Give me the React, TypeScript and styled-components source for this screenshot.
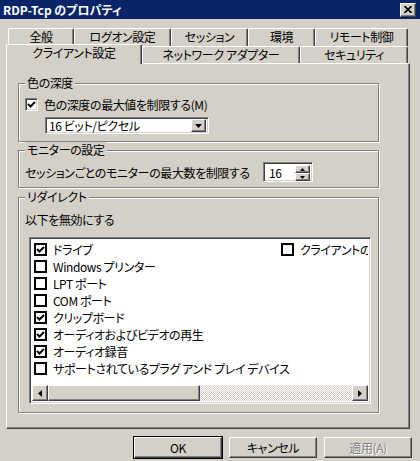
import React from 'react';
import styled, { createGlobalStyle, css } from 'styled-components';

const face = '#d4d0c8';
const shade = '#808080';
const dark = '#404040';

interface Redirect {
  label: string;
  checked: boolean;
}

const redirects: Redirect[] = [
  { label: 'ドライブ', checked: true },
  { label: 'Windows プリンター', checked: false },
  { label: 'LPT ポート', checked: false },
  { label: 'COM ポート', checked: false },
  { label: 'クリップボード', checked: true },
  { label: 'オーディオおよびビデオの再生', checked: true },
  { label: 'オーディオ録音', checked: true },
  { label: 'サポートされているプラグ アンド プレイ デバイス', checked: false },
  { label: 'クライアントの通常使うプリンター', checked: false },
];

const backTabs = [
  { label: '全般', width: 66 },
  { label: 'ログオン設定', width: 97 },
  { label: 'セッション', width: 77 },
  { label: '環境', width: 67 },
  { label: 'リモート制御', width: 93 },
];

const frontTabs = [
  { label: 'クライアント設定', width: 136, active: true },
  { label: 'ネットワーク アダプター', width: 158 },
  { label: 'セキュリティ', width: 108 },
];

const raised = css`
  border: 1px solid;
  border-color: #fff ${dark} ${dark} #fff;
  box-shadow: inset -1px -1px ${shade};
  background: ${face};
`;

const sunken = css`
  border: 1px solid;
  border-color: ${shade} #fff #fff ${shade};
  box-shadow: inset 1px 1px ${dark}, inset -1px -1px ${face};
`;

const GlobalStyle = createGlobalStyle`
  body {
    margin: 0;
    background: ${face};
  }
  * {
    box-sizing: border-box;
  }
`;

const Window = styled.div`
  width: 420px;
  height: 461px;
  overflow: hidden;
  background: ${face};
  font-family: "Noto Sans CJK JP", "Noto Sans", sans-serif;
  font-size: 12px;
  font-feature-settings: "palt";
  letter-spacing: -0.4px;
  color: #000;
  display: flex;
  flex-direction: column;
`;

const TitleBar = styled.div`
  height: 19px;
  flex: none;
  background: #0a246a;
  color: #fff;
  font-weight: bold;
  letter-spacing: 0;
  display: flex;
  align-items: center;
  justify-content: space-between;
  padding: 0 4px 0 3px;
  line-height: 19px;
`;

const CloseButton = styled.div`
  ${raised}
  width: 16px;
  height: 14px;
  display: flex;
  align-items: center;
  justify-content: center;
`;

const Content = styled.div`
  padding: 9px 10px 0 6px;
  display: flex;
  flex-direction: column;
`;

const TabRow = styled.div<{ $indent: number; $height: number }>`
  display: flex;
  align-items: flex-start;
  height: ${(p) => p.$height}px;
  padding-left: ${(p) => p.$indent}px;
`;

const Tab = styled.div<{ $width: number; $active?: boolean }>`
  position: relative;
  width: ${(p) => p.$width}px;
  height: ${(p) => (p.$active ? 20 : 18)}px;
  margin-top: ${(p) => (p.$active ? -2 : 0)}px;
  z-index: ${(p) => (p.$active ? 2 : 0)};
  background: ${face};
  border-top: 1px solid #fff;
  border-left: 1px solid #fff;
  border-right: 1px solid ${dark};
  box-shadow: inset -1px 0 ${shade};
  border-radius: 2px 2px 0 0;
  text-align: center;
  line-height: 16px;
  white-space: nowrap;
`;

const Panel = styled.div`
  position: relative;
  width: 404px;
  height: 366px;
  border: 1px solid;
  border-color: #fff ${dark} ${dark} #fff;
  box-shadow: inset -1px -1px ${shade};
  padding: 19px 0 0 11px;
  display: flex;
  flex-direction: column;
`;

const Group = styled.div<{ $height: number; $gap: number }>`
  position: relative;
  width: 361px;
  height: ${(p) => p.$height}px;
  margin-top: ${(p) => p.$gap}px;
  border: 1px solid ${shade};
  box-shadow: 1px 1px 0 #fff, inset 1px 1px 0 #fff;
  display: flex;
  flex-direction: column;
`;

const Legend = styled.span`
  position: absolute;
  top: -9px;
  left: 6px;
  padding: 0 2px;
  background: ${face};
  line-height: 16px;
`;

const CheckRow = styled.label`
  display: flex;
  align-items: center;
  gap: 6px;
  height: 17px;
  padding-left: 6px;
  margin-top: 12px;
`;

const Box = styled.span<{ $flat?: boolean }>`
  flex: none;
  width: 13px;
  height: 13px;
  background: #fff;
  display: flex;
  align-items: center;
  justify-content: center;
  ${(p) =>
    p.$flat
      ? css`
          border: 2px solid #000;
        `
      : sunken}
`;

const Combo = styled.div`
  ${sunken}
  width: 164px;
  height: 17px;
  margin: 4px 0 0 26px;
  background: #fff;
  display: flex;
  align-items: center;
  padding: 2px 2px 2px 3px;
`;

const ComboText = styled.span`
  flex: 1;
  line-height: 13px;
`;

const ArrowButton = styled.div<{ $w: number; $h: number }>`
  ${raised}
  flex: none;
  width: ${(p) => p.$w}px;
  height: ${(p) => p.$h}px;
  display: flex;
  align-items: center;
  justify-content: center;
`;

const MonitorRow = styled.div`
  display: grid;
  grid-template-columns: 238px 50px;
  align-items: center;
  padding-left: 6px;
  margin-top: 11px;
`;

const Spinner = styled.div`
  ${sunken}
  height: 20px;
  background: #fff;
  display: flex;
  align-items: stretch;
  padding: 2px;
`;

const SpinText = styled.span`
  flex: 1;
  padding-left: 3px;
  line-height: 16px;
`;

const SpinButtons = styled.div`
  display: flex;
  flex-direction: column;
  width: 15px;
`;

const Caption = styled.div`
  padding-left: 6px;
  margin-top: 14px;
  line-height: 16px;
`;

const ListBox = styled.div`
  ${sunken}
  width: 342px;
  height: 167px;
  margin: 9px 0 0 10px;
  background: #fff;
  padding: 2px;
  display: flex;
  flex-direction: column;
`;

const ListItems = styled.div`
  flex: 1;
  overflow: hidden;
  display: grid;
  grid-auto-flow: column;
  grid-template-rows: repeat(8, 17px);
  grid-auto-columns: 247px;
  padding: 1px 0 0 2px;
`;

const ListItem = styled.div`
  display: flex;
  align-items: center;
  gap: 6px;
  height: 17px;
  white-space: nowrap;
  line-height: 17px;
`;

const ScrollBar = styled.div`
  height: 16px;
  flex: none;
  display: flex;
`;

const Thumb = styled.div`
  ${raised}
  width: 152px;
`;

const Track = styled.div`
  flex: 1;
  background: repeating-conic-gradient(#fff 0 25%, ${face} 0 50%) 0 0 / 2px 2px;
`;

const ButtonRow = styled.div`
  display: flex;
  justify-content: flex-end;
  gap: 7px;
  margin: 8px -2px 0 0;
`;

const Button = styled.div<{ $default?: boolean; $disabled?: boolean }>`
  width: 88px;
  height: 21px;
  display: flex;
  align-items: center;
  justify-content: center;
  background: ${face};
  border: 1px solid;
  border-color: #fff ${dark} ${dark} #fff;
  box-shadow: inset -1px -1px ${shade};
  color: ${(p) => (p.$disabled ? shade : '#000')};
  text-shadow: ${(p) => (p.$disabled ? '1px 1px #fff' : 'none')};
  ${(p) =>
    p.$default &&
    css`
      outline: 1px solid #000;
    `}
`;

const Check: React.FC = () => (
  <svg width="9" height="9" viewBox="0 0 9 9">
    <path d="M1 4 L3.5 6.5 L8 2" stroke="#000" strokeWidth="2" fill="none" />
  </svg>
);

const Triangle: React.FC<{ dir: 'down' | 'up' | 'left' | 'right'; size?: number }> = ({ dir, size = 7 }) => {
  const h = Math.ceil(size / 2);
  const pts = {
    down: `0,0 ${size},0 ${size / 2},${h}`,
    up: `0,${h} ${size},${h} ${size / 2},0`,
    left: `${h},0 ${h},${size} 0,${size / 2}`,
    right: `0,0 0,${size} ${h},${size / 2}`,
  }[dir];
  const vertical = dir === 'down' || dir === 'up';
  return (
    <svg width={vertical ? size : h} height={vertical ? h : size}>
      <polygon points={pts} fill="#000" />
    </svg>
  );
};

const App: React.FC = () => (
  <Window>
    <GlobalStyle />
    <TitleBar>
      <span>RDP-Tcp のプロパティ</span>
      <CloseButton>
        <svg width="8" height="7" viewBox="0 0 8 7">
          <path d="M0.5 0 L7.5 7 M7.5 0 L0.5 7" stroke="#000" strokeWidth="1.7" />
        </svg>
      </CloseButton>
    </TitleBar>
    <Content>
      <TabRow $indent={2} $height={18}>
        {backTabs.map((t) => (
          <Tab key={t.label} $width={t.width}>
            {t.label}
          </Tab>
        ))}
      </TabRow>
      <TabRow $indent={0} $height={17}>
        {frontTabs.map((t) => (
          <Tab key={t.label} $width={t.width} $active={t.active}>
            {t.label}
          </Tab>
        ))}
      </TabRow>
      <Panel>
        <Group $height={59} $gap={0}>
          <Legend>色の深度</Legend>
          <CheckRow>
            <Box>
              <Check />
            </Box>
            色の深度の最大値を制限する(M)
          </CheckRow>
          <Combo>
            <ComboText>16 ビット/ピクセル</ComboText>
            <ArrowButton $w={15} $h={13}>
              <Triangle dir="down" />
            </ArrowButton>
          </Combo>
        </Group>
        <Group $height={38} $gap={8}>
          <Legend>モニターの設定</Legend>
          <MonitorRow>
            <span>セッションごとのモニターの最大数を制限する</span>
            <Spinner>
              <SpinText>16</SpinText>
              <SpinButtons>
                <ArrowButton $w={15} $h={8}>
                  <Triangle dir="up" size={5} />
                </ArrowButton>
                <ArrowButton $w={15} $h={8}>
                  <Triangle dir="down" size={5} />
                </ArrowButton>
              </SpinButtons>
            </Spinner>
          </MonitorRow>
        </Group>
        <Group $height={216} $gap={9}>
          <Legend>リダイレクト</Legend>
          <Caption>以下を無効にする</Caption>
          <ListBox>
            <ListItems>
              {redirects.map((r) => (
                <ListItem key={r.label}>
                  <Box $flat>{r.checked && <Check />}</Box>
                  {r.label}
                </ListItem>
              ))}
            </ListItems>
            <ScrollBar>
              <ArrowButton $w={16} $h={16}>
                <Triangle dir="left" />
              </ArrowButton>
              <Thumb />
              <Track />
              <ArrowButton $w={16} $h={16}>
                <Triangle dir="right" />
              </ArrowButton>
            </ScrollBar>
          </ListBox>
        </Group>
      </Panel>
      <ButtonRow>
        <Button $default>OK</Button>
        <Button>キャンセル</Button>
        <Button $disabled>適用(A)</Button>
      </ButtonRow>
    </Content>
  </Window>
);

export default App;
